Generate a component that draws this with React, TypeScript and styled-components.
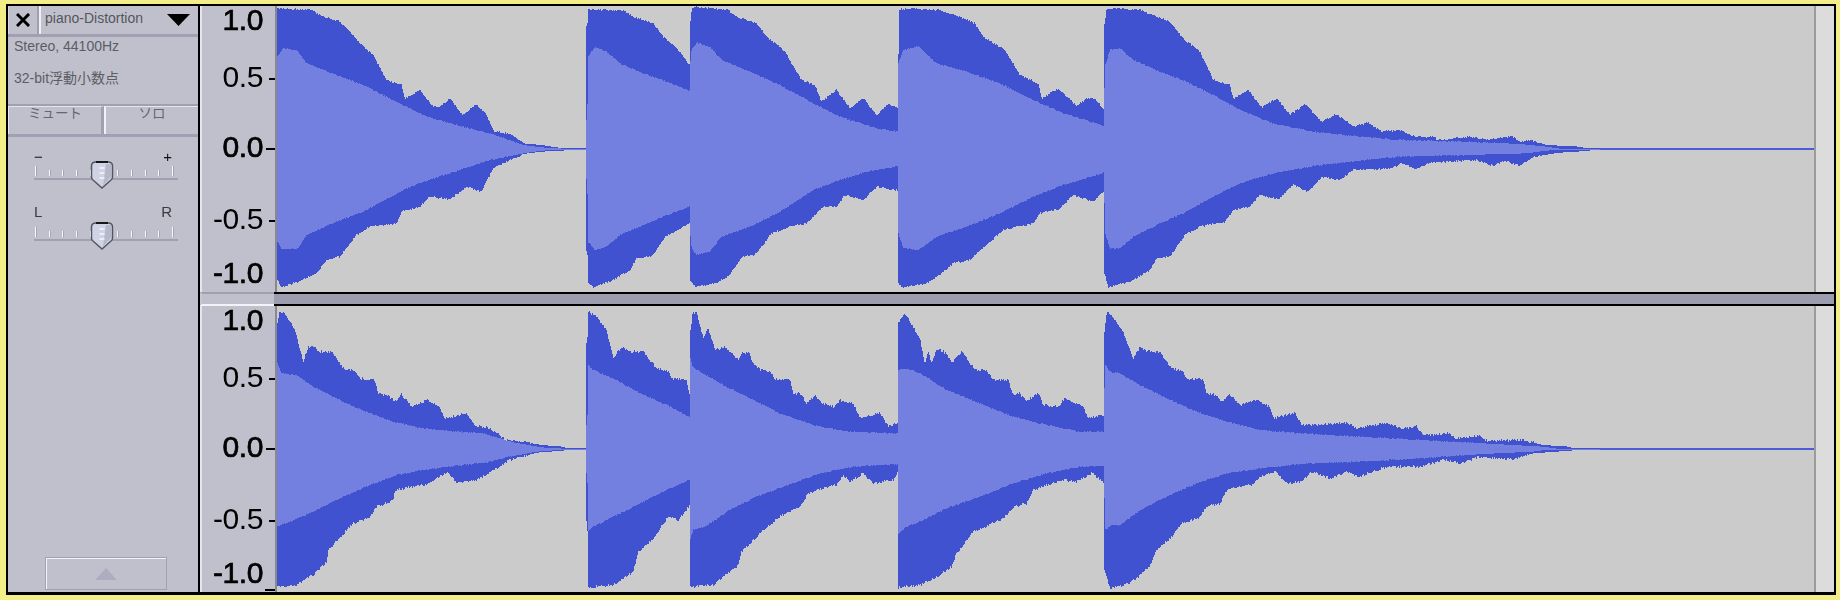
import React from "react";
import styled, { createGlobalStyle } from "styled-components";

const Global = createGlobalStyle`
  html, body { margin: 0; padding: 0; background: #f4ee88; width: 1840px; height: 600px; overflow: hidden; }
  #root { width: 1840px; height: 600px; }
`;

const FONT = `"Liberation Sans", "Noto Sans CJK JP", sans-serif`;
const PANEL = "#c0c0cc";
const RULE = "#a0a0b2";

const Page = styled.div`
  width: 1840px;
  height: 600px;
  box-sizing: border-box;
  padding: 4px 3px 4px 6px;
  filter: blur(0.45px);
`;
const Frame = styled.div`
  display: flex;
  width: 1830px;
  height: 591px;
  box-sizing: border-box;
  border: solid #000;
  border-width: 2px 2px 3px 2px;
  font-family: ${FONT};
`;
const Panel = styled.div`
  display: flex;
  flex-direction: column;
  width: 190px;
  flex: none;
  background: ${PANEL};
  border-right: 2px solid #000;
`;
const Header = styled.div`
  display: flex;
  height: 28px;
  border-bottom: 3px solid ${RULE};
`;
const CloseBtn = styled.div`
  display: flex;
  align-items: center;
  justify-content: center;
  width: 28px;
  border-right: 2px solid ${RULE};
  border-left: 1px solid #d8d8e2;
`;
const NameBtn = styled.div`
  display: flex;
  flex: 1;
  align-items: center;
  justify-content: space-between;
  padding: 0 7px 4px 4px;
  border-left: 2px solid #f0f0f6;
  font-size: 14px;
  color: #55555c;
  margin-right: 1px;
  & > svg { margin-top: 4px; }
`;
const Info = styled.div`
  display: flex;
  flex-direction: column;
  gap: 18px;
  height: 69px;
  box-sizing: border-box;
  padding: 2px 0 0 6px;
  font-size: 14px;
  line-height: 14px;
  color: #5c5c64;
  border-bottom: 2px solid ${RULE};
`;
const ToggleRow = styled.div`
  display: flex;
  height: 28px;
  border-bottom: 3px solid ${RULE};
`;
const Toggle = styled.div`
  flex: 1;
  text-align: center;
  font-size: 13.5px;
  line-height: 14px;
  color: #66666e;
  border-top: 1px solid #e4e4ec;
  border-left: 1px solid #e8e8f0;
  & + & { border-left: 2px solid #f0f0f6; }
  &:first-child { border-right: 3px solid ${RULE}; }
`;
const Slider = styled.div`
  position: relative;
  width: 144px;
  margin: ${(p: { $top: number }) => p.$top}px 0 0 26px;
`;
const SliderLabels = styled.div`
  display: flex;
  justify-content: space-between;
  width: 138px;
  font-size: 15px;
  line-height: 15px;
  height: 15px;
  color: ${(p: { $dark?: boolean }) => (p.$dark ? "#111" : "#3a3a40")};
`;
const Ticks = styled.div`
  display: flex;
  justify-content: space-between;
  align-items: flex-end;
  width: 139px;
  height: 10px;
  margin: ${(p: { $gap: number }) => p.$gap}px 0 0 1px;
`;
const Tick = styled.span`
  width: 2px;
  height: ${(p: { $tall?: boolean }) => (p.$tall ? 10 : 6)}px;
  background: linear-gradient(90deg, #f8f8fc 50%, #a4a4b4 50%);
`;
const Track = styled.div`
  height: 2px;
  margin-top: 2px;
  background: ${RULE};
`;
const ThumbHolder = styled.svg`
  position: absolute;
  left: 56px;
  top: ${(p: { $y: number }) => p.$y}px;
`;
const Collapse = styled.div`
  display: flex;
  align-items: center;
  justify-content: center;
  margin: auto 0 2px 37px;
  width: 122px;
  height: 33px;
  box-sizing: border-box;
  border: 1px solid ${RULE};
  box-shadow: inset 1px 1px 0 #f4f4fa;
`;
const Channels = styled.div`
  display: flex;
  flex-direction: column;
  flex: 1;
  min-width: 0;
`;
const Channel = styled.div`
  display: flex;
  height: 286px;
  background: #dcdcdc;
`;
const Ruler = styled.div`
  position: relative;
  flex: none;
  width: 77px;
  box-sizing: border-box;
  background: ${PANEL};
  border-left: 2px solid #e6e6ee;
  border-right: 2px solid #88888e;
  display: flex;
  flex-direction: column;
`;
const RulerRow = styled.div`
  display: flex;
  align-items: center;
  justify-content: flex-end;
  height: 28px;
  flex: none;
  margin-top: ${(p: { $gap: number }) => p.$gap}px;
`;
const RulerText = styled.span`
  font-size: 30px;
  line-height: 28px;
  color: #000;
  letter-spacing: -0.4px;
  -webkit-text-stroke: ${(p: { $major?: boolean }) => (p.$major ? "0.7px #000" : "0")};
`;
const TickSlot = styled.span`
  display: flex;
  justify-content: flex-end;
  width: 12px;
  flex: none;
  margin-top: 4px;
`;
const RulerTick = styled.span`
  display: block;
  height: 2px;
  width: ${(p: { $w: number }) => p.$w}px;
  background: #000;
`;
const BottomTick = styled.span`
  position: absolute;
  right: 0;
  bottom: 1px;
  width: 10px;
  height: 2px;
  background: #000;
`;
const WaveArea = styled.div`
  flex: none;
  width: 1539px;
  box-sizing: border-box;
  background: #cbcbcb;
  border-right: 2px solid #9c9c9c;
  line-height: 0;
`;
const Gutter = styled.div`
  flex: 1;
`;
const SepRow = styled.div`
  display: flex;
  height: 14px;
`;
const SepLeft = styled.div`
  flex: none;
  width: 74px;
  box-sizing: border-box;
  background: ${PANEL};
  border-top: 2px solid ${RULE};
  border-bottom: 2px solid #f2f2f8;
  border-left: 2px solid #c8c8d4;
`;
const SepBar = styled.div`
  flex: 1;
  box-sizing: border-box;
  background: #9c9eb0;
  border-top: 2px solid #000;
  border-bottom: 2px solid #000;
`;

type Pts = number[][];
type Note = { ox: number; x0: number; x1: number; ot: Pts; it: Pts; ib: Pts; ob: Pts };

const CH1: Note[] = [
  { ox: 270, x0: 277, x1: 586,
    ot: [[22,25],[125,30],[150,45],[210,65],[240,95],[290,150],[310,165],[350,240],[395,255],[405,295],[450,270],[490,320],[510,322],[540,295],[578,345],[620,312],[650,345],[672,395],[720,400],[760,430],[815,435],[880,445],[948,445]],
    it: [[22,170],[40,145],[80,150],[110,190],[200,225],[280,255],[340,285],[400,315],[460,345],[540,370],[660,400],[760,435],[815,442],[880,446],[948,446]],
    ib: [[22,725],[35,748],[85,745],[110,705],[200,665],[280,635],[400,570],[460,545],[540,520],[660,480],[760,460],[815,452],[880,449],[948,449]],
    ob: [[22,840],[35,862],[85,845],[140,820],[170,780],[210,770],[260,705],[300,680],[380,670],[395,635],[450,620],[480,590],[540,598],[590,560],[635,575],[670,505],[720,480],[760,462],[815,455],[880,452],[890,450],[948,450]] },
  { ox: 270, x0: 586, x1: 690,
    ot: [[948,80],[952,80],[955,28],[1060,32],[1090,50],[1150,70],[1180,110],[1225,150],[1258,195]],
    it: [[948,360],[952,360],[954,170],[975,142],[1010,155],[1050,190],[1120,220],[1190,245],[1258,272]],
    ib: [[948,535],[952,535],[954,725],[975,750],[1010,740],[1050,705],[1110,680],[1180,650],[1258,620]],
    ob: [[948,750],[952,750],[955,850],[970,862],[1030,840],[1080,810],[1100,775],[1145,770],[1190,705],[1225,690],[1258,670]] },
  { ox: 680, x0: 690, x1: 898,
    ot: [[30,80],[35,28],[50,20],[145,30],[165,48],[230,70],[260,110],[315,155],[340,200],[365,240],[405,255],[425,305],[470,270],[510,325],[550,295],[590,345],[625,312],[655,325]],
    it: [[30,200],[35,150],[50,128],[90,140],[125,180],[210,215],[300,255],[400,310],[480,350],[590,385],[655,395]],
    ib: [[30,690],[35,745],[50,765],[90,755],[125,710],[210,680],[300,635],[400,570],[480,540],[560,515],[655,498]],
    ob: [[30,840],[45,860],[105,850],[150,825],[185,770],[225,765],[275,700],[330,680],[380,670],[430,620],[470,620],[495,585],[550,600],[590,560],[655,572]] },
  { ox: 680, x0: 898, x1: 1104,
    ot: [[655,190],[658,28],[690,25],[780,30],[850,55],[885,70],[910,110],[975,150],[1020,225],[1075,250],[1085,295],[1135,265],[1190,318],[1220,295],[1245,295],[1272,328]],
    it: [[655,190],[670,150],[715,140],[770,190],[860,215],[960,250],[1060,300],[1150,340],[1272,378]],
    ib: [[655,700],[670,745],[715,750],[770,710],[860,680],[960,640],[1060,590],[1150,555],[1272,518]],
    ob: [[655,850],[670,862],[740,850],[780,825],[820,790],[870,780],[920,735],[970,690],[1060,670],[1080,640],[1140,625],[1180,585],[1240,605],[1272,575]] },
  { ox: 1100, x0: 1104, x1: 1600,
    ot: [[12,85],[20,28],[45,25],[120,30],[210,65],[250,115],[300,155],[340,240],[390,255],[400,295],[445,270],[485,322],[530,295],[570,345],[615,313],[665,365],[710,342],[760,380],[805,367],[845,395],[900,390],[945,410],[1000,410],[1015,420],[1110,410],[1165,420],[1235,408],[1260,425],[1290,420],[1340,435],[1440,440],[1460,445],[1500,445]],
    it: [[12,330],[15,200],[30,150],[60,145],[100,180],[180,215],[260,245],[340,285],[420,330],[520,370],[640,395],[780,410],[900,420],[1100,425],[1260,432],[1340,440],[1380,446],[1500,446]],
    ib: [[12,520],[15,700],[30,745],[60,745],[100,710],[180,670],[260,635],[340,590],[420,550],[520,520],[640,498],[780,482],[900,470],[1100,465],[1280,460],[1340,452],[1380,449],[1500,449]],
    ob: [[12,815],[25,862],[90,845],[150,810],[170,775],[210,770],[255,705],[300,680],[375,665],[400,630],[450,620],[480,585],[535,598],[580,555],[625,575],[665,530],[720,540],[760,510],[875,505],[905,490],[950,508],[990,488],[1130,480],[1180,497],[1215,482],[1260,497],[1300,470],[1380,458],[1460,453],[1480,450],[1500,450]] },
];
const CH2: Note[] = [
  { ox: 270, x0: 277, x1: 586,
    ot: [[22,75],[28,40],[40,35],[75,90],[100,185],[115,140],[130,140],[150,155],[185,155],[220,205],[260,215],[270,235],[315,240],[325,280],[350,285],[375,305],[395,282],[425,320],[470,300],[505,315],[525,355],[590,338],[615,375],[660,385],[710,420],[760,425],[815,435],[880,440],[890,445],[948,445]],
    it: [[22,190],[35,220],[80,225],[130,260],[220,305],[300,340],[370,365],[460,385],[560,395],[640,400],[720,425],[815,442],[880,446],[948,446]],
    ib: [[22,680],[35,675],[85,655],[150,625],[220,590],[300,555],[380,525],[460,510],[560,497],[650,487],[720,470],[800,455],[880,449],[948,449]],
    ob: [[22,860],[70,860],[130,825],[170,785],[175,750],[250,670],[295,655],[320,620],[370,600],[375,570],[460,555],[495,540],[535,515],[560,550],[620,540],[680,505],[720,480],[800,458],[880,452],[890,450],[948,450]] },
  { ox: 270, x0: 586, x1: 690,
    ot: [[948,130],[952,130],[955,35],[975,45],[1010,90],[1030,175],[1055,140],[1080,155],[1120,155],[1160,205],[1195,215],[1205,235],[1250,240],[1258,285]],
    it: [[948,375],[952,375],[955,195],[970,210],[1030,235],[1100,275],[1190,315],[1258,350]],
    ib: [[948,520],[952,520],[955,695],[970,680],[1030,650],[1100,615],[1190,570],[1258,540]],
    ob: [[948,660],[952,660],[955,862],[1030,855],[1090,815],[1105,755],[1150,715],[1195,650],[1225,660],[1258,618]] },
  { ox: 680, x0: 690, x1: 898,
    ot: [[30,105],[38,40],[50,38],[70,115],[85,85],[105,150],[135,140],[150,155],[175,178],[190,158],[210,158],[215,185],[240,210],[270,215],[285,235],[330,240],[340,285],[360,280],[380,310],[405,285],[425,310],[465,320],[480,300],[520,310],[540,355],[600,338],[625,380],[655,368]],
    it: [[30,170],[38,200],[60,215],[130,255],[220,300],[300,340],[400,375],[500,395],[655,400]],
    ib: [[30,720],[40,690],[75,680],[150,630],[230,590],[310,560],[420,520],[520,500],[655,492]],
    ob: [[30,860],[100,855],[175,795],[185,755],[250,690],[300,650],[360,620],[385,580],[430,565],[470,555],[490,525],[510,545],[550,520],[580,550],[640,540],[655,515]] },
  { ox: 680, x0: 898, x1: 1104,
    ot: [[655,70],[675,38],[690,65],[720,115],[735,190],[745,155],[755,190],[770,145],[800,160],[815,190],[845,155],[885,210],[920,210],[940,240],[985,240],[1000,285],[1020,280],[1040,305],[1075,278],[1090,315],[1135,320],[1155,295],[1210,320],[1225,355],[1272,345]],
    it: [[655,210],[680,205],[730,225],[800,270],[900,310],[1000,350],[1100,375],[1200,395],[1272,395]],
    ib: [[655,700],[680,680],[730,660],[800,625],[900,590],[1000,550],[1100,520],[1200,500],[1272,498]],
    ob: [[655,862],[720,855],[780,825],[815,800],[830,760],[880,695],[920,680],[970,655],[1000,620],[1040,610],[1060,570],[1150,540],[1190,545],[1235,520],[1272,548]] },
  { ox: 1100, x0: 1104, x1: 1600,
    ot: [[12,110],[20,38],[35,45],[70,95],[100,180],[120,140],[140,155],[180,155],[215,205],[250,215],[260,235],[310,240],[320,280],[350,285],[365,305],[390,283],[420,315],[465,300],[510,320],[520,355],[585,338],[605,375],[690,372],[740,368],[770,385],[860,368],[900,385],[950,380],[970,405],[1050,400],[1065,415],[1140,408],[1155,422],[1270,420],[1330,435],[1410,440],[1415,445],[1500,445]],
    it: [[12,340],[15,190],[30,215],[60,220],[120,255],[200,295],[290,335],[380,365],[480,390],[600,400],[780,410],[960,420],[1150,430],[1330,440],[1370,446],[1500,446]],
    ib: [[12,500],[15,690],[35,675],[60,675],[130,625],[200,590],[290,550],[380,520],[480,505],[600,492],[780,485],[960,475],[1150,462],[1300,455],[1340,449],[1500,449]],
    ob: [[12,805],[30,865],[90,850],[150,800],[170,750],[215,710],[245,670],[295,655],[320,620],[360,610],[385,565],[455,555],[480,530],[530,515],[555,550],[605,545],[635,515],[690,535],[740,515],[775,530],[860,500],[960,500],[1030,480],[1085,490],[1135,470],[1240,478],[1300,460],[1410,452],[1430,450],[1500,450]] },
];

function rng(seed: number) {
  let s = seed;
  return () => {
    s = (s * 1664525 + 1013904223) % 4294967296;
    return s / 4294967296 - 0.5;
  };
}

function sample(pts: Pts, ox: number, oy: number, x: number) {
  const zx = (x + 0.5 - ox) * 3;
  if (zx <= pts[0][0]) return pts[0][1] / 3 + oy;
  for (let i = 1; i < pts.length; i++) {
    if (zx <= pts[i][0]) {
      const [ax, ay] = pts[i - 1];
      const [bx, by] = pts[i];
      const t = bx === ax ? 1 : (zx - ax) / (bx - ax);
      return (ay + (by - ay) * t) / 3 + oy;
    }
  }
  return pts[pts.length - 1][1] / 3 + oy;
}

function bandPath(top: Pts, bot: Pts, n: Note, oy: number, amp: number, seed: number) {
  const r = rng(seed);
  const center = oy + 149;
  const fwd: string[] = [];
  const back: string[] = [];
  for (let x = n.x0; x < n.x1; x++) {
    let a = sample(top, n.ox, oy, x);
    let b = sample(bot, n.ox, oy, x);
    const gapA = center - a;
    const gapB = b - center;
    const ja = gapA > 6 ? r() * amp : 0;
    const jb = gapB > 6 ? r() * amp : 0;
    a = Math.round(a + ja);
    b = Math.round(b + jb);
    fwd.push(`${x} ${a} ${x + 1} ${a}`);
    back.unshift(`${x + 1} ${b} ${x} ${b}`);
  }
  return "M" + fwd.join(" L") + " L" + back.join(" L") + "Z";
}

function Wave({ notes, oy, seed, amp }: { notes: Note[]; oy: number; seed: number; amp: number }) {
  return (
    <svg width={1537} height={286} viewBox={`277 ${oy + 6} 1537 286`}>
      {notes.map((n, i) => (
        <g key={i}>
          <path d={bandPath(n.ot, n.ob, n, oy, amp, seed + i * 7)} fill="#4152d0" />
          <path d={bandPath(n.it, n.ib, n, oy, 1.2, seed + i * 13 + 3)} fill="#7480e0" />
        </g>
      ))}
      <rect x={1600} y={oy + 148} width={214} height={2} fill="#4a5cd8" />
    </svg>
  );
}

function Thumb({ y }: { y: number }) {
  return (
    <ThumbHolder $y={y} width={24} height={28} viewBox="0 0 24 28">
      <path d="M1.5 5 Q1.5 1 6 1 H18 Q22.5 1 22.5 5 V16 Q22.5 18 21 19 L12 27 L3 19 Q1.5 18 1.5 16 Z" fill="#d0d2e6" stroke="#55555e" strokeWidth={1.5} />
      <path d="M6 1 H18" stroke="#000" strokeWidth={1.6} />
      <path d="M16 3 H21 V16 L13 24.5 Z" fill="#b6b8ca" />
      <path d="M9.5 7 H14.5 M9.5 12 H14.5 M9.5 17 H14.5" stroke="#f6f6fc" strokeWidth={1.4} />
    </ThumbHolder>
  );
}

const TALL = [0, 10];
function SliderTicks({ gap }: { gap: number }) {
  return (
    <Ticks $gap={gap}>
      {Array.from({ length: 11 }, (_, i) => (
        <Tick key={i} $tall={TALL.includes(i)} />
      ))}
    </Ticks>
  );
}

function RulerColumn({ bottomTick }: { bottomTick?: boolean }) {
  return (
    <Ruler>
      <RulerRow $gap={0}><RulerText $major>1.0</RulerText><TickSlot /></RulerRow>
      <RulerRow $gap={29}><RulerText>0.5</RulerText><TickSlot><RulerTick $w={6} /></TickSlot></RulerRow>
      <RulerRow $gap={42}><RulerText $major>0.0</RulerText><TickSlot><RulerTick $w={9} /></TickSlot></RulerRow>
      <RulerRow $gap={43.5}><RulerText>-0.5</RulerText><TickSlot><RulerTick $w={6} /></TickSlot></RulerRow>
      <RulerRow $gap={26}><RulerText $major>-1.0</RulerText><TickSlot /></RulerRow>
      {bottomTick && <BottomTick />}
    </Ruler>
  );
}

export default function App() {
  return (
    <>
      <Global />
      <Page>
        <Frame>
          <Panel>
            <Header>
              <CloseBtn>
                <svg width={14} height={14} viewBox="0 0 14 14">
                  <path d="M2 2 L12 12 M12 2 L2 12" stroke="#000" strokeWidth={3} strokeLinecap="square" />
                </svg>
              </CloseBtn>
              <NameBtn>
                <span>piano-Distortion</span>
                <svg width={23} height={12} viewBox="0 0 23 12">
                  <path d="M0 0 H23 L11.5 12 Z" fill="#000" />
                </svg>
              </NameBtn>
            </Header>
            <Info>
              <div>Stereo, 44100Hz</div>
              <div>32-bit浮動小数点</div>
            </Info>
            <ToggleRow>
              <Toggle>ミュート</Toggle>
              <Toggle>ソロ</Toggle>
            </ToggleRow>
            <Slider $top={12}>
              <SliderLabels $dark><span>−</span><span>+</span></SliderLabels>
              <SliderTicks gap={2} />
              <Track />
              <Thumb y={12} />
            </Slider>
            <Slider $top={24}>
              <SliderLabels><span>L</span><span>R</span></SliderLabels>
              <SliderTicks gap={8} />
              <Track />
              <Thumb y={18} />
            </Slider>
            <Collapse>
              <svg width={22} height={12} viewBox="0 0 22 12">
                <path d="M11 0 L22 12 H0 Z" fill="#adadbf" />
              </svg>
            </Collapse>
          </Panel>
          <Channels>
            <Channel>
              <RulerColumn />
              <WaveArea><Wave notes={CH1} oy={0} seed={11} amp={1.8} /></WaveArea>
              <Gutter />
            </Channel>
            <SepRow>
              <SepLeft />
              <SepBar />
            </SepRow>
            <Channel>
              <RulerColumn bottomTick />
              <WaveArea><Wave notes={CH2} oy={300} seed={97} amp={2.6} /></WaveArea>
              <Gutter />
            </Channel>
          </Channels>
        </Frame>
      </Page>
    </>
  );
}
